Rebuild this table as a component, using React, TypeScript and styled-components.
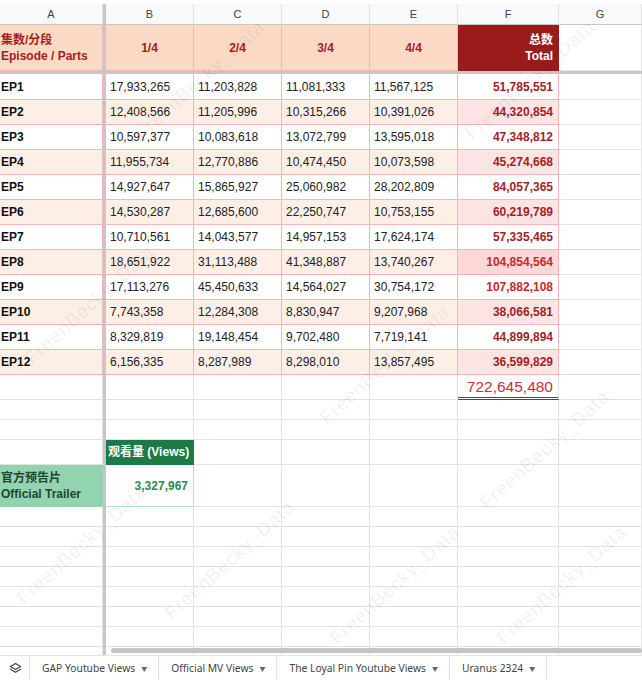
import * as React from "react";
import styled, { createGlobalStyle } from "styled-components";

const GlobalStyle = createGlobalStyle`
  html, body {
    margin: 0;
    padding: 0;
    background: #ffffff;
  }
  body {
    font-family: "Liberation Sans", "Noto Sans CJK SC", Arial, sans-serif;
    color: #222;
  }
  * {
    box-sizing: border-box;
  }
`;

const COLS = "103px 3px 88px 88px 88px 88px 101px 1fr";

const GRID = "#e2e3e3";
const PINK_LINE = "#f3b6b0";
const PEACH = "#fdefe6";
const HEAD_PEACH = "#fcd9c5";
const ROSE = "#fde4e4";
const BERRY = "#a31f1f";
const BERRY_DARK = "#9b1a1a";

type Episode = {
  label: string;
  parts: string[];
  total: string;
};

const episodes: Episode[] = [
  { label: "EP1", parts: ["17,933,265", "11,203,828", "11,081,333", "11,567,125"], total: "51,785,551" },
  { label: "EP2", parts: ["12,408,566", "11,205,996", "10,315,266", "10,391,026"], total: "44,320,854" },
  { label: "EP3", parts: ["10,597,377", "10,083,618", "13,072,799", "13,595,018"], total: "47,348,812" },
  { label: "EP4", parts: ["11,955,734", "12,770,886", "10,474,450", "10,073,598"], total: "45,274,668" },
  { label: "EP5", parts: ["14,927,647", "15,865,927", "25,060,982", "28,202,809"], total: "84,057,365" },
  { label: "EP6", parts: ["14,530,287", "12,685,600", "22,250,747", "10,753,155"], total: "60,219,789" },
  { label: "EP7", parts: ["10,710,561", "14,043,577", "14,957,153", "17,624,174"], total: "57,335,465" },
  { label: "EP8", parts: ["18,651,922", "31,113,488", "41,348,887", "13,740,267"], total: "104,854,564" },
  { label: "EP9", parts: ["17,113,276", "45,450,633", "14,564,027", "30,754,172"], total: "107,882,108" },
  { label: "EP10", parts: ["7,743,358", "12,284,308", "8,830,947", "9,207,968"], total: "38,066,581" },
  { label: "EP11", parts: ["8,329,819", "19,148,454", "9,702,480", "7,719,141"], total: "44,899,894" },
  { label: "EP12", parts: ["6,156,335", "8,287,989", "8,298,010", "13,857,495"], total: "36,599,829" },
];

const tabs = ["GAP Youtube Views", "Official MV Views", "The Loyal Pin Youtube Views", "Uranus 2324"];

// centres of the faint diagonal watermark stamps
const watermarks = [
  { x: 200, y: 80 },
  { x: 530, y: 80 },
  { x: 90, y: 305 },
  { x: 385, y: 365 },
  { x: 545, y: 450 },
  { x: 82, y: 545 },
  { x: 230, y: 560 },
  { x: 395, y: 585 },
  { x: 562, y: 585 },
];

const Page = styled.div`
  width: 642px;
  height: 680px;
  overflow: hidden;
  display: flex;
  flex-direction: column;
  background: #fff;
`;

const Sheet = styled.div`
  position: relative;
  height: 655px;
  overflow: hidden;
  padding-top: 4px;
`;

const Row = styled.div<{ $h: number }>`
  display: grid;
  grid-template-columns: ${COLS};
  height: ${(p) => p.$h}px;
`;

const FrozenRow = styled.div`
  height: 3px;
  background: #c7c7c7;
`;

const Frozen = styled.div`
  background: #c7c7c7;
`;

const ColLetter = styled.div`
  display: flex;
  align-items: center;
  justify-content: center;
  background: #f8f9fa;
  border-right: 1px solid #e0e0e0;
  border-bottom: 1px solid #c4c7c5;
  font-size: 11px;
  color: #444;
`;

const Cell = styled.div<{
  $bg?: string;
  $color?: string;
  $bold?: boolean;
  $align?: "left" | "center" | "right";
  $line?: string;
  $pad?: number;
}>`
  display: flex;
  flex-direction: column;
  justify-content: center;
  align-items: ${(p) =>
    p.$align === "right" ? "flex-end" : p.$align === "center" ? "center" : "flex-start"};
  text-align: ${(p) => p.$align || "left"};
  padding: 0 ${(p) => (p.$align === "right" ? 5 : 2)}px 0 ${(p) => p.$pad ?? 2}px;
  background: ${(p) => p.$bg || "#fff"};
  color: ${(p) => p.$color || "#222"};
  font-weight: ${(p) => (p.$bold ? 700 : 400)};
  font-size: 12px;
  line-height: 16px;
  border-right: 1px solid ${(p) => p.$line || GRID};
  border-bottom: 1px solid ${(p) => p.$line || GRID};
  white-space: nowrap;
  overflow: hidden;
`;

const GrandTotal = styled(Cell)`
  border-bottom: 3px double #4a4a4a;
  font-size: 15.5px;
  color: #cc3030;
  padding-top: 2px;
`;

const Scrollbar = styled.div`
  position: absolute;
  left: 111px;
  right: 0;
  bottom: 2px;
  height: 5px;
  border-radius: 3px;
  background: #c5c5c5;
`;

const Watermark = styled.span`
  position: absolute;
  font-family: "Liberation Sans", Arial, sans-serif;
  font-size: 19px;
  color: rgba(0, 0, 0, 0.065);
  transform: translate(-50%, -50%) rotate(-42deg);
  white-space: nowrap;
  pointer-events: none;
  letter-spacing: 1px;
`;

const TabBar = styled.div`
  height: 25px;
  display: flex;
  align-items: stretch;
  border-top: 1px solid #e3e3e3;
  background: #fff;
`;

const LayersButton = styled.div`
  width: 30px;
  display: flex;
  align-items: center;
  justify-content: center;
  border-right: 1px solid #e3e3e3;
  padding-left: 2px;
`;

const Tab = styled.div`
  display: flex;
  align-items: center;
  gap: 6px;
  padding: 0 11px 0 12px;
  border-right: 1px solid #e3e3e3;
  font-family: "Noto Sans", "Noto Sans CJK SC", sans-serif;
  font-size: 10.3px;
  color: #444;
  white-space: nowrap;
`;

const Caret = styled.span`
  font-size: 6px;
  color: #666;
  margin-top: 1px;
`;

const EmptyRow = ({ h }: { h: number }) => (
  <Row $h={h}>
    <Cell />
    <Frozen />
    <Cell />
    <Cell />
    <Cell />
    <Cell />
    <Cell />
    <Cell />
  </Row>
);

const App = () => {
  return (
    <Page>
      <GlobalStyle />
      <Sheet>
        <Row $h={21}>
          <ColLetter>A</ColLetter>
          <Frozen />
          {["B", "C", "D", "E", "F", "G"].map((l) => (
            <ColLetter key={l}>{l}</ColLetter>
          ))}
        </Row>

        <Row $h={46}>
          <Cell $bg={HEAD_PEACH} $color={BERRY} $bold $line={PINK_LINE} $pad={1}>
            <span>集数/分段</span>
            <span>Episode / Parts</span>
          </Cell>
          <Frozen />
          {["1/4", "2/4", "3/4", "4/4"].map((q) => (
            <Cell key={q} $bg={HEAD_PEACH} $color={BERRY} $bold $align="center" $line={PINK_LINE}>
              {q}
            </Cell>
          ))}
          <Cell $bg={BERRY_DARK} $color="#fff" $bold $align="right" $line={BERRY_DARK}>
            <span>总数</span>
            <span>Total</span>
          </Cell>
          <Cell />
        </Row>

        <FrozenRow />

        {episodes.map((ep, i) => {
          const band = i % 2 === 1;
          const big = parseInt(ep.total.replace(/,/g, ""), 10) > 100000000;
          return (
            <Row key={ep.label} $h={i === 0 ? 26 : 25}>
              <Cell $bg={band ? PEACH : "#fff"} $color="#111" $bold $line={PINK_LINE} $pad={1}>
                {ep.label}
              </Cell>
              <Frozen />
              {ep.parts.map((v, j) => (
                <Cell key={j} $bg={band ? PEACH : "#fff"} $line={PINK_LINE} $pad={4}>
                  {v}
                </Cell>
              ))}
              <Cell
                $bg={band ? (big ? "#fcd8d8" : ROSE) : "#fff"}
                $color={big ? "#c62a2a" : BERRY}
                $bold
                $align="right"
                $line={PINK_LINE}
              >
                {ep.total}
              </Cell>
              <Cell />
            </Row>
          );
        })}

        <Row $h={25}>
          <Cell />
          <Frozen />
          <Cell />
          <Cell />
          <Cell />
          <Cell />
          <GrandTotal $align="right">722,645,480</GrandTotal>
          <Cell />
        </Row>

        <EmptyRow h={20} />
        <EmptyRow h={20} />

        <Row $h={25}>
          <Cell />
          <Frozen />
          <Cell $bg="#1d7a46" $color="#fff" $bold $line="#1d7a46">
            观看量 (Views)
          </Cell>
          <Cell />
          <Cell />
          <Cell />
          <Cell />
          <Cell />
        </Row>

        <Row $h={42}>
          <Cell $bg="#93d4b0" $color="#1f4630" $bold $line="#93d4b0" $pad={1}>
            <span>官方预告片</span>
            <span>Official Trailer</span>
          </Cell>
          <Frozen />
          <Cell $color="#2a8a55" $bold $align="right" $line="#b9e2cc">
            3,327,967
          </Cell>
          <Cell />
          <Cell />
          <Cell />
          <Cell />
          <Cell />
        </Row>

        {[0, 1, 2, 3, 4, 5, 6, 7].map((k) => (
          <EmptyRow key={k} h={20} />
        ))}

        {watermarks.map((w, i) => (
          <Watermark key={i} style={{ left: w.x, top: w.y }}>
            FreenBecky_Data
          </Watermark>
        ))}

        <Scrollbar />
      </Sheet>

      <TabBar>
        <LayersButton>
          <svg width="13" height="13" viewBox="0 0 14 14" fill="none" stroke="#444" strokeWidth="1.3" strokeLinejoin="round" strokeLinecap="round">
            <path d="M7 1.5 L12.5 4.8 L7 8.1 L1.5 4.8 Z" />
            <path d="M1.5 7.8 L7 11.1 L12.5 7.8" />
          </svg>
        </LayersButton>
        {tabs.map((t) => (
          <Tab key={t}>
            <span>{t}</span>
            <Caret>▼</Caret>
          </Tab>
        ))}
      </TabBar>
    </Page>
  );
};

export default App;
